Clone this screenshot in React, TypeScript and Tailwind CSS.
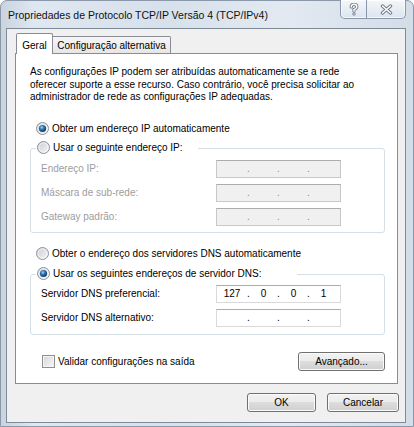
import React from "react";

const font = "font-['Liberation_Sans',Arial,sans-serif] text-[10px] text-black";

const Radio = ({ checked }: { checked?: boolean }) => {
  return (
    <svg width="13" height="13" viewBox="0 0 13 13" className="shrink-0">
      <defs>
        <linearGradient id="rb-bg" x1="0" y1="0" x2="1" y2="1">
          <stop offset="0" stopColor="#c9ccd1" />
          <stop offset="1" stopColor="#f7f7f7" />
        </linearGradient>
        <radialGradient id="rb-dot" cx="0.4" cy="0.35" r="0.7">
          <stop offset="0" stopColor="#9bd6f6" />
          <stop offset="0.45" stopColor="#2c70b2" />
          <stop offset="1" stopColor="#0d2f58" />
        </radialGradient>
      </defs>
      <circle cx="6.5" cy="6.5" r="6" fill="url(#rb-bg)" stroke="#8f9296" />
      <circle cx="6.5" cy="6.5" r="4.6" fill="none" stroke="#ffffff" strokeOpacity="0.6" />
      {checked && <circle cx="6.5" cy="6.5" r="3.6" fill="url(#rb-dot)" />}
    </svg>
  );
};

const IpBox = ({ parts, disabled }: { parts?: string[]; disabled?: boolean }) => {
  const p = parts || ["", "", "", ""];
  return (
    <div
      className={
        "w-[125px] h-[18px] flex items-center border " +
        (disabled
          ? "bg-[#f0f0f0] border-[#c8c8c8] border-t-[#adadad] text-[#8a8a8a]"
          : "bg-white border-[#d9d9d9] border-t-[#ababab] text-black")
      }
    >
      <span className="w-[30px] text-center">{p[0]}</span>
      <span className="w-[3px] text-center">.</span>
      <span className="w-[27px] text-center">{p[1]}</span>
      <span className="w-[3px] text-center">.</span>
      <span className="w-[27px] text-center">{p[2]}</span>
      <span className="w-[3px] text-center">.</span>
      <span className="w-[27px] text-center">{p[3]}</span>
    </div>
  );
};

const Field = ({ label, disabled, parts }: { label: string; disabled?: boolean; parts?: string[] }) => {
  return (
    <div className="flex items-center h-[18px]">
      <span className={"w-[175px] " + (disabled ? "text-[#9d9d9d]" : "")}>{label}</span>
      <IpBox parts={parts} disabled={disabled} />
    </div>
  );
};

const btn =
  "h-[19px] flex items-center justify-center rounded-[3px] border border-[#707070] bg-[linear-gradient(#f2f2f2_0%,#ebebeb_50%,#dddddd_50%,#cfcfcf_100%)] shadow-[inset_0_0_0_1px_#fbfbfb]";

const App = () => {
  return (
    <div className={"w-[414px] h-[427px] overflow-hidden " + font}>
      <div className="w-[414px] h-[427px] rounded-t-[7px] border border-[#8a98a9] bg-[linear-gradient(90deg,#c9d4df_0%,#dfe7f0_8%,#d7e1eb_40%,#e2e9f1_70%,#d3dde8_100%)] flex flex-col">
        {/* title bar */}
        <div className="h-[27px] flex items-start">
          <p className="pl-[7px] pt-[7px] text-[10.5px] text-[#111]">
            Propriedades de Protocolo TCP/IP Versão 4 (TCP/IPv4)
          </p>
          <div className="ml-auto mr-[7px] -mt-px flex h-[19px] w-[66px] overflow-hidden rounded-b-[5px] border border-t-0 border-[#8796aa] bg-[linear-gradient(#f4f7fa,#dbe4ee)] shadow-[inset_0_0_0_1px_rgba(255,255,255,0.7)]">
            <div className="w-[26px] flex items-center justify-center border-r border-[#8796aa]">
              <svg width="10" height="13" viewBox="0 0 10 13">
                <path d="M2.2 4 Q2.2 1.3 5 1.3 Q7.8 1.3 7.8 3.8 Q7.8 5.6 5 6.6 L5 8.2" fill="none" stroke="#6f7a88" strokeWidth="3.2" strokeLinecap="round" />
                <circle cx="5" cy="11" r="1.6" fill="#6f7a88" />
                <path d="M2.2 4 Q2.2 1.3 5 1.3 Q7.8 1.3 7.8 3.8 Q7.8 5.6 5 6.6 L5 8.2" fill="none" stroke="#ffffff" strokeWidth="1.4" strokeLinecap="round" />
                <circle cx="5" cy="11" r="0.7" fill="#ffffff" />
              </svg>
            </div>
            <div className="flex-1 flex items-center justify-center">
              <svg width="13" height="11" viewBox="0 0 13 11">
                <path d="M2.5 2 L10.5 9 M10.5 2 L2.5 9" stroke="#6f7a88" strokeWidth="3.4" strokeLinecap="round" />
                <path d="M2.5 2 L10.5 9 M10.5 2 L2.5 9" stroke="#ffffff" strokeWidth="1.5" strokeLinecap="round" />
              </svg>
            </div>
          </div>
        </div>

        {/* client area */}
        <div className="ml-[5px] w-[400px] h-[395px] border border-[#7f8a97] bg-[#f0f0f0] flex flex-col">
          {/* tabs */}
          <div className="relative z-10 mt-[4px] -mb-px pl-[9px] h-[21px] flex items-end">
            <div className="h-[21px] w-[37px] bg-white border border-b-0 border-[#898c95] rounded-t-[2px] flex items-start justify-center pt-[4px]">
              Geral
            </div>
            <div className="h-[17px] w-[118px] mb-px border border-l-0 border-b-0 border-[#898c95] rounded-tr-[2px] bg-[linear-gradient(#f6f6f6,#e6e6e6)] flex items-center justify-center">
              Configuração alternativa
            </div>
          </div>

          {/* panel */}
          <div className="ml-[8px] w-[383px] h-[331px] bg-white border border-[#898c95] flex flex-col">
            <p className="pl-[14px] pt-[12px] leading-[12.5px]">
              As configurações IP podem ser atribuídas automaticamente se a rede
              <br />
              oferecer suporte a esse recurso. Caso contrário, você precisa solicitar ao
              <br />
              administrador de rede as configurações IP adequadas.
            </p>

            <label className="mt-[18px] pl-[20px] h-[14px] flex items-center gap-[3px]">
              <Radio checked />
              <span>Obter um endereço IP automaticamente</span>
            </label>

            <div className="relative mt-[12px] ml-[14px] w-[355px] h-[85px] rounded-[3px] border border-[#d5dfe5] pl-[10px] pt-[11px] flex flex-col gap-[6px]">
              <div className="absolute -top-[8px] left-[5px] w-[162px] h-[14px] bg-white pl-px flex items-center gap-[3px]">
                <Radio />
                <span>Usar o seguinte endereço IP:</span>
              </div>
              <Field label="Endereço IP:" disabled />
              <Field label="Máscara de sub-rede:" disabled />
              <Field label="Gateway padrão:" disabled />
            </div>

            <label className="mt-[14px] pl-[20px] h-[14px] flex items-center gap-[3px]">
              <Radio />
              <span>Obter o endereço dos servidores DNS automaticamente</span>
            </label>

            <div className="relative mt-[13px] ml-[14px] w-[355px] h-[61px] rounded-[3px] border border-[#d5dfe5] pl-[10px] pt-[10px] flex flex-col gap-[6px]">
              <div className="absolute -top-[8px] left-[5px] w-[261px] h-[14px] bg-white pl-px flex items-center gap-[3px]">
                <Radio checked />
                <span>Usar os seguintes endereços de servidor DNS:</span>
              </div>
              <Field label="Servidor DNS preferencial:" parts={["127", "0", "0", "1"]} />
              <Field label="Servidor DNS alternativo:" />
            </div>

            <div className="mt-[17px] pl-[26px] pr-[12px] flex items-center">
              <div className="w-[13px] h-[13px] border border-[#8e8f8f] bg-[linear-gradient(135deg,#d4d6d9,#f8f8f8)] shadow-[inset_0_0_0_1px_#f4f4f4]" />
              <span className="ml-[3px]">Validar configurações na saída</span>
              <div className={btn + " ml-auto w-[87px]"}>Avançado...</div>
            </div>
          </div>

          {/* dialog buttons */}
          <div className="mt-[9px] pr-[6px] flex justify-end gap-[11px]">
            <div className={btn + " w-[69px]"}>OK</div>
            <div className={btn + " w-[72px]"}>Cancelar</div>
          </div>
        </div>
      </div>
    </div>
  );
};

export default App;
